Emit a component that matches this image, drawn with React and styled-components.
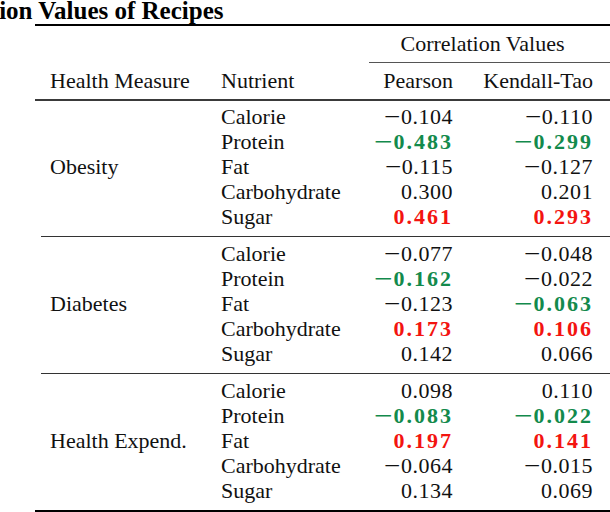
import React from 'react'
import styled, { createGlobalStyle } from 'styled-components'

const GREEN = '#138a4c'
const RED = '#f31410'

const groups = [
  {
    measure: 'Obesity',
    rows: [
      ['Calorie', '−0.104', '−0.110'],
      ['Protein', { v: '−0.483', c: 'low' }, { v: '−0.299', c: 'low' }],
      ['Fat', '−0.115', '−0.127'],
      ['Carbohydrate', '0.300', '0.201'],
      ['Sugar', { v: '0.461', c: 'high' }, { v: '0.293', c: 'high' }],
    ],
  },
  {
    measure: 'Diabetes',
    rows: [
      ['Calorie', '−0.077', '−0.048'],
      ['Protein', { v: '−0.162', c: 'low' }, '−0.022'],
      ['Fat', '−0.123', { v: '−0.063', c: 'low' }],
      ['Carbohydrate', { v: '0.173', c: 'high' }, { v: '0.106', c: 'high' }],
      ['Sugar', '0.142', '0.066'],
    ],
  },
  {
    measure: 'Health Expend.',
    rows: [
      ['Calorie', '0.098', '0.110'],
      ['Protein', { v: '−0.083', c: 'low' }, { v: '−0.022', c: 'low' }],
      ['Fat', { v: '0.197', c: 'high' }, { v: '0.141', c: 'high' }],
      ['Carbohydrate', '−0.064', '−0.015'],
      ['Sugar', '0.134', '0.069'],
    ],
  },
]

// split the leading minus off so it can be drawn as wide as the math minus
const Value = ({ cell }) => {
  const text = typeof cell === 'string' ? cell : cell.v
  const tone = typeof cell === 'string' ? undefined : cell.c
  const negative = text.startsWith('−')
  return (
    <Num tone={tone}>
      {negative && <Minus bold={!!tone}>−</Minus>}
      {negative ? text.slice(1) : text}
    </Num>
  )
}

const App = () => {
  return (
    <Page>
      <GlobalStyle />
      <Caption>
        <CaptionText>Correlation Values of Recipes</CaptionText>
      </Caption>
      <Table>
        <Rule weight={2} />
        <HeadGrid>
          <SuperHead>Correlation Values</SuperHead>
        </HeadGrid>
        <CmidRule />
        <HeadGrid>
          <HeadCell>Health Measure</HeadCell>
          <HeadCell>Nutrient</HeadCell>
          <HeadCell right>Pearson</HeadCell>
          <HeadCell right>Kendall-Tao</HeadCell>
        </HeadGrid>
        <Rule weight={2} tone="#3a3a3a" />
        {groups.map((group, gi) => (
          <React.Fragment key={group.measure}>
            <Group first={gi === 0}>
              <Measure>{group.measure}</Measure>
              {group.rows.map(([nutrient, pearson, kendall]) => (
                <React.Fragment key={nutrient}>
                  <Nutrient>{nutrient}</Nutrient>
                  <Value cell={pearson} />
                  <Value cell={kendall} />
                </React.Fragment>
              ))}
            </Group>
            {gi < groups.length - 1 ? (
              <Rule weight={1} tone="#333" inset={6} />
            ) : (
              <Rule weight={2} />
            )}
          </React.Fragment>
        ))}
      </Table>
    </Page>
  )
}

const GlobalStyle = createGlobalStyle`
  html, body {
    margin: 0;
    padding: 0;
    background: #fff;
    overflow: hidden;
  }
`

const Page = styled.div`
  width: 610px;
  height: 512px;
  overflow: hidden;
  font-family: 'Liberation Serif', 'Times New Roman', serif;
  color: #111;
`

const Caption = styled.div`
  height: 24px;
  overflow: hidden;
  white-space: nowrap;
`

const CaptionText = styled.div`
  margin-left: -92px;
  font-size: 25px;
  font-weight: bold;
  line-height: 22px;
  color: #000;
`

const Table = styled.div`
  margin-left: 35px;
  width: 590px;
`

const Rule = styled.div`
  height: ${p => p.weight}px;
  background: ${p => p.tone || '#000'};
  margin-left: ${p => p.inset || 0}px;
`

const CmidRule = styled.div`
  height: 1px;
  background: #555;
  margin-left: 334px;
`

const columns = '186px 140px 107px 140px'

const HeadGrid = styled.div`
  display: grid;
  grid-template-columns: ${columns};
  height: 36px;
  align-items: center;
  font-size: 22px;
`

const SuperHead = styled.div`
  grid-column: 3 / span 2;
  text-align: center;
  padding-right: 4px;
`

const HeadCell = styled.div`
  text-align: ${p => (p.right ? 'right' : 'left')};
  padding-left: ${p => (p.right ? 0 : 15)}px;
  padding-right: ${p => (p.right ? 15 : 0)}px;
  &:nth-child(2) {
    padding-left: 0;
  }
`

const Group = styled.div`
  display: grid;
  grid-template-columns: ${columns};
  grid-auto-rows: 25px;
  padding: ${p => (p.first ? 3 : 4)}px 0 7px;
  font-size: 22px;
  align-items: center;
`

const Measure = styled.div`
  grid-column: 1;
  grid-row: 1 / span 5;
  align-self: center;
  padding-left: 15px;
`

const Nutrient = styled.div`
  grid-column: 2;
`

const Num = styled.div`
  text-align: right;
  padding-right: 15px;
  white-space: nowrap;
  font-weight: ${p => (p.tone ? 'bold' : 'normal')};
  letter-spacing: ${p => (p.tone ? '2px' : '0.5px')};
  color: ${p => (p.tone === 'low' ? GREEN : p.tone === 'high' ? RED : 'inherit')};
`

const Minus = styled.span`
  display: inline-block;
  width: ${p => (p.bold ? 0.9 : 0.76)}em;
  text-align: left;
  transform: scaleX(${p => (p.bold ? 1.5 : 1.32)});
  transform-origin: left center;
  letter-spacing: 0;
`

export default App
